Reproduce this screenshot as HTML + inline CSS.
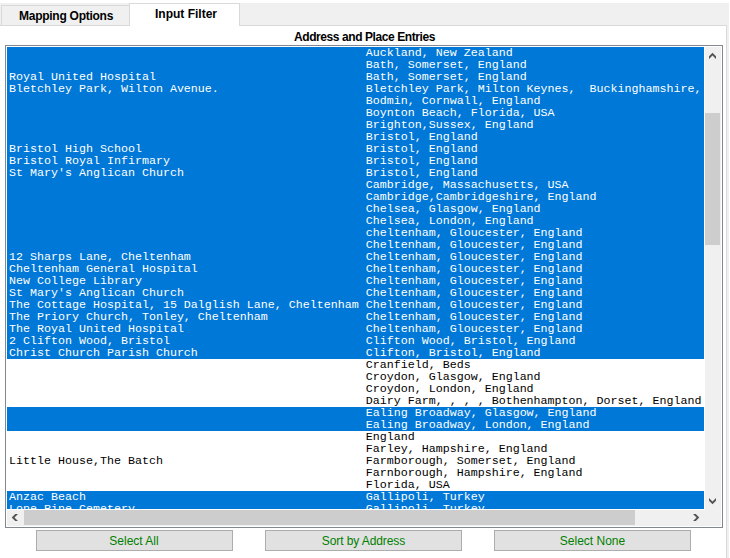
<!DOCTYPE html>
<html><head><meta charset="utf-8">
<style>
*{margin:0;padding:0;box-sizing:border-box}
html,body{width:730px;height:558px;overflow:hidden;background:#fff;position:relative}
.abs{position:absolute}
#strip{left:0;top:3px;width:729px;height:22px;background:#f0f0f0}
#panel{left:-10px;top:25px;width:737px;height:600px;background:#fff;border:1px solid #d9d9d9}
#rightstrip{left:727px;top:25px;width:2px;height:533px;background:#f0f0f0}
.tab{font-family:"Liberation Sans",sans-serif;font-weight:bold;font-size:12px;line-height:14px;color:#000;white-space:nowrap}
#tab1{left:1px;top:5px;width:129px;height:21px;background:#f0f0f0;border:1px solid #d9d9d9;border-right:none}
#tab2{left:129px;top:3px;width:111px;height:23px;background:#fff;border:1px solid #d9d9d9;border-bottom:none}
#t1{left:19px;top:9px;letter-spacing:-0.26px}
#t2{left:155px;top:7px}
#heading{left:294px;top:30px;font-family:"Liberation Sans",sans-serif;font-weight:bold;font-size:12px;line-height:14px;letter-spacing:-0.42px;white-space:nowrap}
#lb{left:5px;top:45px;width:718px;height:483px;border:1px solid #828790;background:#fff}
#clip{left:7px;top:47px;width:697px;height:462px;overflow:hidden}
.r{position:absolute;left:0;width:697px;height:12px;line-height:12px;padding-left:2px;font-family:"Liberation Mono",monospace;font-size:11.67px;white-space:pre;color:#000}
.s{background:#0078d7;color:#fff}
#vs{left:705px;top:47px;width:16px;height:463px;background:#f0f0f0}
#vthumb{left:705px;top:113px;width:15px;height:132px;background:#cdcdcd}
#hs{left:7px;top:510px;width:714px;height:16px;background:#f0f0f0}
#hthumb{left:24px;top:510px;width:611px;height:15px;background:#cdcdcd}
.btn{top:530px;width:197px;height:21px;background:#e1e1e1;border:1px solid #adadad;font-family:"Liberation Sans",sans-serif;font-size:12px;color:#008000;text-align:center;line-height:19px;padding-top:1px;white-space:nowrap}
#b1{left:36px;text-indent:-1px}#b2{left:265px;letter-spacing:-0.09px}#b3{left:494px}
svg{position:absolute}
</style></head><body>
<div id="strip" class="abs"></div>
<div id="panel" class="abs"></div>
<div id="rightstrip" class="abs"></div>
<div id="tab1" class="abs"></div>
<div id="tab2" class="abs"></div>
<div id="t1" class="abs tab">Mapping Options</div>
<div id="t2" class="abs tab">Input Filter</div>
<div id="heading" class="abs">Address and Place Entries</div>
<div id="lb" class="abs"></div>
<div id="clip" class="abs">
<div class="r s" style="top:0px">                                                   Auckland, New Zealand</div>
<div class="r s" style="top:12px">                                                   Bath, Somerset, England</div>
<div class="r s" style="top:24px">Royal United Hospital                              Bath, Somerset, England</div>
<div class="r s" style="top:36px">Bletchley Park, Wilton Avenue.                     Bletchley Park, Milton Keynes,  Buckinghamshire, England</div>
<div class="r s" style="top:48px">                                                   Bodmin, Cornwall, England</div>
<div class="r s" style="top:60px">                                                   Boynton Beach, Florida, USA</div>
<div class="r s" style="top:72px">                                                   Brighton,Sussex, England</div>
<div class="r s" style="top:84px">                                                   Bristol, England</div>
<div class="r s" style="top:96px">Bristol High School                                Bristol, England</div>
<div class="r s" style="top:108px">Bristol Royal Infirmary                            Bristol, England</div>
<div class="r s" style="top:120px">St Mary&#x27;s Anglican Church                          Bristol, England</div>
<div class="r s" style="top:132px">                                                   Cambridge, Massachusetts, USA</div>
<div class="r s" style="top:144px">                                                   Cambridge,Cambridgeshire, England</div>
<div class="r s" style="top:156px">                                                   Chelsea, Glasgow, England</div>
<div class="r s" style="top:168px">                                                   Chelsea, London, England</div>
<div class="r s" style="top:180px">                                                   cheltenham, Gloucester, England</div>
<div class="r s" style="top:192px">                                                   Cheltenham, Gloucester, England</div>
<div class="r s" style="top:204px">12 Sharps Lane, Cheltenham                         Cheltenham, Gloucester, England</div>
<div class="r s" style="top:216px">Cheltenham General Hospital                        Cheltenham, Gloucester, England</div>
<div class="r s" style="top:228px">New College Library                                Cheltenham, Gloucester, England</div>
<div class="r s" style="top:240px">St Mary&#x27;s Anglican Church                          Cheltenham, Gloucester, England</div>
<div class="r s" style="top:252px">The Cottage Hospital, 15 Dalglish Lane, Cheltenham Cheltenham, Gloucester, England</div>
<div class="r s" style="top:264px">The Priory Church, Tonley, Cheltenham              Cheltenham, Gloucester, England</div>
<div class="r s" style="top:276px">The Royal United Hospital                          Cheltenham, Gloucester, England</div>
<div class="r s" style="top:288px">2 Clifton Wood, Bristol                            Clifton Wood, Bristol, England</div>
<div class="r s" style="top:300px">Christ Church Parish Church                        Clifton, Bristol, England</div>
<div class="r" style="top:312px">                                                   Cranfield, Beds</div>
<div class="r" style="top:324px">                                                   Croydon, Glasgow, England</div>
<div class="r" style="top:336px">                                                   Croydon, London, England</div>
<div class="r" style="top:348px">                                                   Dairy Farm, , , , Bothenhampton, Dorset, England</div>
<div class="r s" style="top:360px">                                                   Ealing Broadway, Glasgow, England</div>
<div class="r s" style="top:372px">                                                   Ealing Broadway, London, England</div>
<div class="r" style="top:384px">                                                   England</div>
<div class="r" style="top:396px">                                                   Farley, Hampshire, England</div>
<div class="r" style="top:408px">Little House,The Batch                             Farmborough, Somerset, England</div>
<div class="r" style="top:420px">                                                   Farnborough, Hampshire, England</div>
<div class="r" style="top:432px">                                                   Florida, USA</div>
<div class="r s" style="top:444px">Anzac Beach                                        Gallipoli, Turkey</div>
<div class="r s" style="top:456px">Lone Pine Cemetery                                 Gallipoli, Turkey</div>
</div>
<div id="vs" class="abs"></div>
<div id="vthumb" class="abs"></div>
<div id="hs" class="abs"></div>
<div id="hthumb" class="abs"></div>
<svg style="left:0;top:0" width="730" height="558">
 <polygon points="709,56.2 712.5,52.7 716,56.2 716,59 712.5,55.5 709,59" fill="#555"/>
 <polygon points="709,498 712.5,501.5 716,498 716,500.8 712.5,504.3 709,500.8" fill="#555"/>
 <polygon points="18,514 15.2,514 11.7,517.5 15.2,521 18,521 14.5,517.5" fill="#555"/>
 <polygon points="693,514 695.8,514 699.3,517.5 695.8,521 693,521 696.5,517.5" fill="#555"/>
</svg>
<div id="b1" class="abs btn">Select All</div>
<div id="b2" class="abs btn">Sort by Address</div>
<div id="b3" class="abs btn">Select None</div>
</body></html>
